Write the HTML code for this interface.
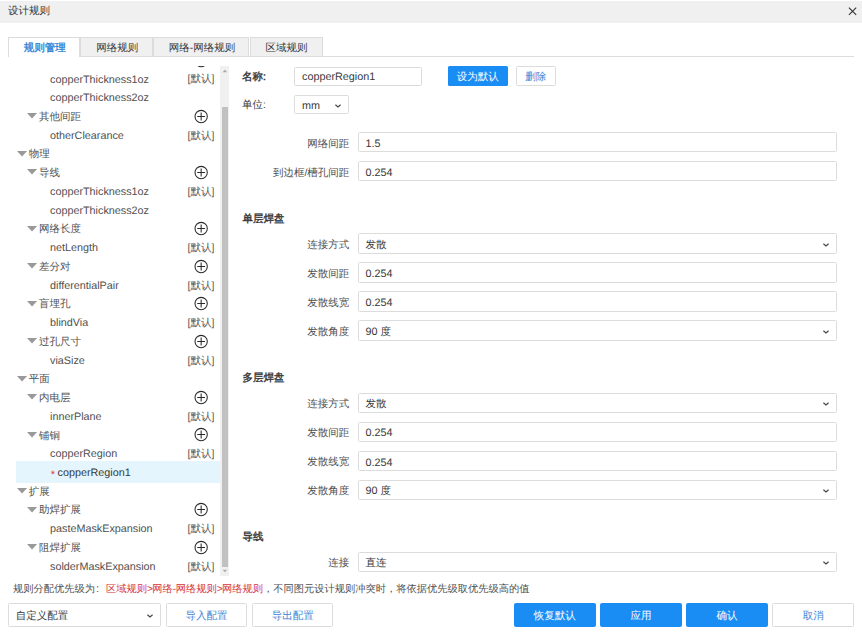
<!DOCTYPE html>
<html><head><meta charset="utf-8"><style>
html,body{margin:0;padding:0}
body{width:862px;height:639px;overflow:hidden;position:relative;background:#fff;font-family:"Liberation Sans",sans-serif;font-size:10.8px;color:#333;text-rendering:geometricPrecision}
.a{position:absolute}
.t{position:absolute;white-space:nowrap;height:18px;line-height:18px}
.z{font-size:10.5px}
.c3{color:#383838}.c4{color:#505050}.c5{color:#555}
.b{-webkit-text-stroke:0.4px currentColor}
</style></head><body>
<div class="a" style="left:0;top:1px;width:862px;height:22px;background:#f0f0f0"></div>
<div class="t c3" style="left:8.00px;top:2.30px;font-size:10.5px;">设计规则</div>
<svg class="a" style="left:847px;top:6px" width="11" height="11" viewBox="0 0 11 11"><path d="M1.9 1.6L9.2 8.9M9.2 1.6L1.9 8.9" stroke="#333" stroke-width="1.1"/></svg>
<div class="a" style="left:8px;top:56px;width:846px;height:1px;background:#dcdcdc"></div>
<div class="a" style="left:8.00px;top:37px;width:72.30px;height:20px;background:#fff;box-sizing:border-box;border:1px solid #dcdcdc;border-bottom:none"></div>
<div class="t c3" style="left:8.50px;top:38.90px;font-size:10.5px;width:72.30px;text-align:center;color:#2f84d6;-webkit-text-stroke:0.35px #2f84d6;">规则管理</div>
<div class="a" style="left:80.30px;top:37px;width:73.10px;height:19px;background:#f0f0f0;box-sizing:border-box;border:1px solid #dcdcdc;border-bottom:none"></div>
<div class="t c3" style="left:80.80px;top:38.90px;font-size:10.5px;width:73.10px;text-align:center;">网络规则</div>
<div class="a" style="left:153.40px;top:37px;width:96.10px;height:19px;background:#f0f0f0;box-sizing:border-box;border:1px solid #dcdcdc;border-bottom:none"></div>
<div class="t c3" style="left:153.90px;top:38.90px;font-size:10.5px;width:96.10px;text-align:center;">网络-网络规则</div>
<div class="a" style="left:249.50px;top:37px;width:73.10px;height:19px;background:#f0f0f0;box-sizing:border-box;border:1px solid #dcdcdc;border-bottom:none"></div>
<div class="t c3" style="left:250.00px;top:38.90px;font-size:10.5px;width:73.10px;text-align:center;">区域规则</div>
<div class="a" style="left:8px;top:66px;width:213px;height:511px;overflow:hidden">
<svg class="a" style="left:186px;top:-13px" width="15" height="15" viewBox="0 0 15 15"><circle cx="7.15" cy="7.50" r="6.15" fill="none" stroke="#2a2a2a" stroke-width="1.05"/><path d="M3.25 7.50H11.05M7.15 3.60V11.40" stroke="#2a2a2a" stroke-width="1.05"/></svg>
<div class="t c4" style="left:42.00px;top:4.50px;">copperThickness1oz</div>
<div class="t c5" style="left:179.50px;top:4.40px;font-size:10.5px;">[默认]</div>
<div class="t c4" style="left:42.00px;top:23.24px;">copperThickness2oz</div>
<svg class="a" style="left:18.50px;top:47.18px" width="11" height="6" viewBox="0 0 11 6"><path d="M0 0H10.1L5.05 5.4Z" fill="#999"/></svg>
<div class="t c4" style="left:31.00px;top:41.93px;font-size:10.5px;">其他间距</div>
<svg class="a" style="left:186px;top:43px" width="15" height="15" viewBox="0 0 15 15"><circle cx="7.15" cy="7.50" r="6.15" fill="none" stroke="#2a2a2a" stroke-width="1.05"/><path d="M3.25 7.50H11.05M7.15 3.60V11.40" stroke="#2a2a2a" stroke-width="1.05"/></svg>
<div class="t c4" style="left:42.00px;top:60.72px;">otherClearance</div>
<div class="t c5" style="left:179.50px;top:60.62px;font-size:10.5px;">[默认]</div>
<svg class="a" style="left:8.50px;top:84.66px" width="11" height="6" viewBox="0 0 11 6"><path d="M0 0H10.1L5.05 5.4Z" fill="#999"/></svg>
<div class="t c4" style="left:20.80px;top:79.41px;font-size:10.5px;">物理</div>
<svg class="a" style="left:18.50px;top:103.40px" width="11" height="6" viewBox="0 0 11 6"><path d="M0 0H10.1L5.05 5.4Z" fill="#999"/></svg>
<div class="t c4" style="left:31.00px;top:98.15px;font-size:10.5px;">导线</div>
<svg class="a" style="left:186px;top:99px" width="15" height="15" viewBox="0 0 15 15"><circle cx="7.15" cy="7.50" r="6.15" fill="none" stroke="#2a2a2a" stroke-width="1.05"/><path d="M3.25 7.50H11.05M7.15 3.60V11.40" stroke="#2a2a2a" stroke-width="1.05"/></svg>
<div class="t c4" style="left:42.00px;top:116.94px;">copperThickness1oz</div>
<div class="t c5" style="left:179.50px;top:116.84px;font-size:10.5px;">[默认]</div>
<div class="t c4" style="left:42.00px;top:135.68px;">copperThickness2oz</div>
<svg class="a" style="left:18.50px;top:159.62px" width="11" height="6" viewBox="0 0 11 6"><path d="M0 0H10.1L5.05 5.4Z" fill="#999"/></svg>
<div class="t c4" style="left:31.00px;top:154.37px;font-size:10.5px;">网络长度</div>
<svg class="a" style="left:186px;top:155px" width="15" height="15" viewBox="0 0 15 15"><circle cx="7.15" cy="7.50" r="6.15" fill="none" stroke="#2a2a2a" stroke-width="1.05"/><path d="M3.25 7.50H11.05M7.15 3.60V11.40" stroke="#2a2a2a" stroke-width="1.05"/></svg>
<div class="t c4" style="left:42.00px;top:173.16px;">netLength</div>
<div class="t c5" style="left:179.50px;top:173.06px;font-size:10.5px;">[默认]</div>
<svg class="a" style="left:18.50px;top:197.10px" width="11" height="6" viewBox="0 0 11 6"><path d="M0 0H10.1L5.05 5.4Z" fill="#999"/></svg>
<div class="t c4" style="left:31.00px;top:191.85px;font-size:10.5px;">差分对</div>
<svg class="a" style="left:186px;top:193px" width="15" height="15" viewBox="0 0 15 15"><circle cx="7.15" cy="7.50" r="6.15" fill="none" stroke="#2a2a2a" stroke-width="1.05"/><path d="M3.25 7.50H11.05M7.15 3.60V11.40" stroke="#2a2a2a" stroke-width="1.05"/></svg>
<div class="t c4" style="left:42.00px;top:210.64px;">differentialPair</div>
<div class="t c5" style="left:179.50px;top:210.54px;font-size:10.5px;">[默认]</div>
<svg class="a" style="left:18.50px;top:234.58px" width="11" height="6" viewBox="0 0 11 6"><path d="M0 0H10.1L5.05 5.4Z" fill="#999"/></svg>
<div class="t c4" style="left:31.00px;top:229.33px;font-size:10.5px;">盲埋孔</div>
<svg class="a" style="left:186px;top:230px" width="15" height="15" viewBox="0 0 15 15"><circle cx="7.15" cy="7.50" r="6.15" fill="none" stroke="#2a2a2a" stroke-width="1.05"/><path d="M3.25 7.50H11.05M7.15 3.60V11.40" stroke="#2a2a2a" stroke-width="1.05"/></svg>
<div class="t c4" style="left:42.00px;top:248.12px;">blindVia</div>
<div class="t c5" style="left:179.50px;top:248.02px;font-size:10.5px;">[默认]</div>
<svg class="a" style="left:18.50px;top:272.06px" width="11" height="6" viewBox="0 0 11 6"><path d="M0 0H10.1L5.05 5.4Z" fill="#999"/></svg>
<div class="t c4" style="left:31.00px;top:266.81px;font-size:10.5px;">过孔尺寸</div>
<svg class="a" style="left:186px;top:268px" width="15" height="15" viewBox="0 0 15 15"><circle cx="7.15" cy="7.50" r="6.15" fill="none" stroke="#2a2a2a" stroke-width="1.05"/><path d="M3.25 7.50H11.05M7.15 3.60V11.40" stroke="#2a2a2a" stroke-width="1.05"/></svg>
<div class="t c4" style="left:42.00px;top:285.60px;">viaSize</div>
<div class="t c5" style="left:179.50px;top:285.50px;font-size:10.5px;">[默认]</div>
<svg class="a" style="left:8.50px;top:309.54px" width="11" height="6" viewBox="0 0 11 6"><path d="M0 0H10.1L5.05 5.4Z" fill="#999"/></svg>
<div class="t c4" style="left:20.80px;top:304.29px;font-size:10.5px;">平面</div>
<svg class="a" style="left:18.50px;top:328.28px" width="11" height="6" viewBox="0 0 11 6"><path d="M0 0H10.1L5.05 5.4Z" fill="#999"/></svg>
<div class="t c4" style="left:31.00px;top:323.03px;font-size:10.5px;">内电层</div>
<svg class="a" style="left:186px;top:324px" width="15" height="15" viewBox="0 0 15 15"><circle cx="7.15" cy="7.50" r="6.15" fill="none" stroke="#2a2a2a" stroke-width="1.05"/><path d="M3.25 7.50H11.05M7.15 3.60V11.40" stroke="#2a2a2a" stroke-width="1.05"/></svg>
<div class="t c4" style="left:42.00px;top:341.82px;">innerPlane</div>
<div class="t c5" style="left:179.50px;top:341.72px;font-size:10.5px;">[默认]</div>
<svg class="a" style="left:18.50px;top:365.76px" width="11" height="6" viewBox="0 0 11 6"><path d="M0 0H10.1L5.05 5.4Z" fill="#999"/></svg>
<div class="t c4" style="left:31.00px;top:360.51px;font-size:10.5px;">铺铜</div>
<svg class="a" style="left:186px;top:361px" width="15" height="15" viewBox="0 0 15 15"><circle cx="7.15" cy="7.50" r="6.15" fill="none" stroke="#2a2a2a" stroke-width="1.05"/><path d="M3.25 7.50H11.05M7.15 3.60V11.40" stroke="#2a2a2a" stroke-width="1.05"/></svg>
<div class="t c4" style="left:42.00px;top:379.30px;">copperRegion</div>
<div class="t c5" style="left:179.50px;top:379.20px;font-size:10.5px;">[默认]</div>
<div class="a" style="left:8.10px;top:395.30px;width:204.90px;height:21.5px;background:#e4f5fd"></div>
<div class="t " style="left:42.70px;top:400.34px;color:#d9434a;font-size:11px">*</div>
<div class="t c3" style="left:49.50px;top:398.04px;">copperRegion1</div>
<svg class="a" style="left:8.50px;top:421.98px" width="11" height="6" viewBox="0 0 11 6"><path d="M0 0H10.1L5.05 5.4Z" fill="#999"/></svg>
<div class="t c4" style="left:20.80px;top:416.73px;font-size:10.5px;">扩展</div>
<svg class="a" style="left:18.50px;top:440.72px" width="11" height="6" viewBox="0 0 11 6"><path d="M0 0H10.1L5.05 5.4Z" fill="#999"/></svg>
<div class="t c4" style="left:31.00px;top:435.47px;font-size:10.5px;">助焊扩展</div>
<svg class="a" style="left:186px;top:436px" width="15" height="15" viewBox="0 0 15 15"><circle cx="7.15" cy="7.50" r="6.15" fill="none" stroke="#2a2a2a" stroke-width="1.05"/><path d="M3.25 7.50H11.05M7.15 3.60V11.40" stroke="#2a2a2a" stroke-width="1.05"/></svg>
<div class="t c4" style="left:42.00px;top:454.26px;">pasteMaskExpansion</div>
<div class="t c5" style="left:179.50px;top:454.16px;font-size:10.5px;">[默认]</div>
<svg class="a" style="left:18.50px;top:478.20px" width="11" height="6" viewBox="0 0 11 6"><path d="M0 0H10.1L5.05 5.4Z" fill="#999"/></svg>
<div class="t c4" style="left:31.00px;top:472.95px;font-size:10.5px;">阻焊扩展</div>
<svg class="a" style="left:186px;top:474px" width="15" height="15" viewBox="0 0 15 15"><circle cx="7.15" cy="7.50" r="6.15" fill="none" stroke="#2a2a2a" stroke-width="1.05"/><path d="M3.25 7.50H11.05M7.15 3.60V11.40" stroke="#2a2a2a" stroke-width="1.05"/></svg>
<div class="t c4" style="left:42.00px;top:491.74px;">solderMaskExpansion</div>
<div class="t c5" style="left:179.50px;top:491.64px;font-size:10.5px;">[默认]</div>
</div>
<div class="a" style="left:220.2px;top:65.8px;width:9.3px;height:510.6px;background:#f0f0f0"></div>
<div class="a" style="left:222px;top:107px;width:5.7px;height:459.8px;background:#c1c1c1"></div>
<svg class="a" style="left:221.9px;top:69px" width="6" height="4" viewBox="0 0 6 4"><path d="M0.6 3.2L2.9 0.8L5.2 3.2Z" fill="#a8a8a8"/></svg>
<svg class="a" style="left:221.9px;top:569px" width="6" height="4" viewBox="0 0 6 4"><path d="M0.6 0.8L2.9 3.2L5.2 0.8Z" fill="#a8a8a8"/></svg>
<div class="t c3 b" style="left:242.00px;top:67.80px;font-size:10.5px;">名称:</div>
<div class="a" style="left:294.00px;top:66.50px;width:128.00px;height:19.00px;background:#fff;box-sizing:border-box;border:1px solid #dcdcdc;border-radius:1.5px;"></div>
<div class="t c3" style="left:302.00px;top:68.20px;">copperRegion1</div>
<div class="a" style="left:447.8px;top:66px;width:59.8px;height:19.6px;background:#1a8df5;border-radius:1.5px"></div>
<div class="t " style="left:447.80px;top:67.50px;font-size:10.5px;width:59.8px;text-align:center;color:#fff">设为默认</div>
<div class="a" style="left:516.00px;top:66.00px;width:39.50px;height:19.60px;background:#fff;box-sizing:border-box;border:1px solid #dcdcdc;border-radius:1.5px;"></div>
<div class="t " style="left:516.00px;top:67.80px;font-size:10.5px;width:39.5px;text-align:center;color:#3b86d6">删除</div>
<div class="t c3" style="left:242.00px;top:96.25px;font-size:10.5px;">单位:</div>
<div class="a" style="left:294.00px;top:95.10px;width:54.80px;height:19.30px;background:#fff;box-sizing:border-box;border:1px solid #dcdcdc;border-radius:1.5px;"></div>
<div class="t c3" style="left:302.00px;top:96.70px;">mm</div>
<svg class="a" style="left:332.50px;top:101.85px" width="10" height="8" viewBox="0 0 10 8"><path d="M2.4 2.75L5 5.0L7.6 2.75" fill="none" stroke="#444" stroke-width="1.15"/></svg>
<div class="t c4" style="left:150.00px;top:134.53px;font-size:10.5px;width:199.3px;text-align:right">网络间距</div><div class="a" style="left:357.60px;top:131.90px;width:479.70px;height:20.56px;background:#fff;box-sizing:border-box;border:1px solid #dcdcdc;border-radius:1.5px;"></div><div class="t c3" style="left:365.50px;top:134.78px;">1.5</div>
<div class="t c4" style="left:150.00px;top:163.55px;font-size:10.5px;width:199.3px;text-align:right">到边框/槽孔间距</div><div class="a" style="left:357.60px;top:160.90px;width:479.70px;height:20.60px;background:#fff;box-sizing:border-box;border:1px solid #dcdcdc;border-radius:1.5px;"></div><div class="t c3" style="left:365.50px;top:163.80px;">0.254</div>
<div class="t c3 b" style="left:242.50px;top:209.95px;font-size:10.5px;">单层焊盘</div>
<div class="t c4" style="left:150.00px;top:235.75px;font-size:10.5px;width:199.3px;text-align:right">连接方式</div><div class="a" style="left:357.60px;top:233.10px;width:479.70px;height:20.60px;background:#fff;box-sizing:border-box;border:1px solid #dcdcdc;border-radius:1.5px;"></div><div class="t c3" style="left:365.50px;top:235.50px;font-size:10.5px;">发散</div><svg class="a" style="left:820.70px;top:240.50px" width="10" height="8" viewBox="0 0 10 8"><path d="M2.4 2.75L5 5.0L7.6 2.75" fill="none" stroke="#444" stroke-width="1.15"/></svg>
<div class="t c4" style="left:150.00px;top:264.80px;font-size:10.5px;width:199.3px;text-align:right">发散间距</div><div class="a" style="left:357.60px;top:262.10px;width:479.70px;height:20.70px;background:#fff;box-sizing:border-box;border:1px solid #dcdcdc;border-radius:1.5px;"></div><div class="t c3" style="left:365.50px;top:265.05px;">0.254</div>
<div class="t c4" style="left:150.00px;top:293.75px;font-size:10.5px;width:199.3px;text-align:right">发散线宽</div><div class="a" style="left:357.60px;top:291.10px;width:479.70px;height:20.60px;background:#fff;box-sizing:border-box;border:1px solid #dcdcdc;border-radius:1.5px;"></div><div class="t c3" style="left:365.50px;top:294.00px;">0.254</div>
<div class="t c4" style="left:150.00px;top:322.80px;font-size:10.5px;width:199.3px;text-align:right">发散角度</div><div class="a" style="left:357.60px;top:320.10px;width:479.70px;height:20.70px;background:#fff;box-sizing:border-box;border:1px solid #dcdcdc;border-radius:1.5px;"></div><div class="t c3" style="left:365.50px;top:323.05px;">90 <span class="z">度</span></div><svg class="a" style="left:820.70px;top:327.55px" width="10" height="8" viewBox="0 0 10 8"><path d="M2.4 2.75L5 5.0L7.6 2.75" fill="none" stroke="#444" stroke-width="1.15"/></svg>
<div class="t c3 b" style="left:242.50px;top:369.35px;font-size:10.5px;">多层焊盘</div>
<div class="t c4" style="left:150.00px;top:395.15px;font-size:10.5px;width:199.3px;text-align:right">连接方式</div><div class="a" style="left:357.60px;top:392.90px;width:479.70px;height:19.80px;background:#fff;box-sizing:border-box;border:1px solid #dcdcdc;border-radius:1.5px;"></div><div class="t c3" style="left:365.50px;top:394.90px;font-size:10.5px;">发散</div><svg class="a" style="left:820.70px;top:399.90px" width="10" height="8" viewBox="0 0 10 8"><path d="M2.4 2.75L5 5.0L7.6 2.75" fill="none" stroke="#444" stroke-width="1.15"/></svg>
<div class="t c4" style="left:150.00px;top:424.15px;font-size:10.5px;width:199.3px;text-align:right">发散间距</div><div class="a" style="left:357.60px;top:421.80px;width:479.70px;height:20.00px;background:#fff;box-sizing:border-box;border:1px solid #dcdcdc;border-radius:1.5px;"></div><div class="t c3" style="left:365.50px;top:424.40px;">0.254</div>
<div class="t c4" style="left:150.00px;top:453.25px;font-size:10.5px;width:199.3px;text-align:right">发散线宽</div><div class="a" style="left:357.60px;top:450.90px;width:479.70px;height:20.00px;background:#fff;box-sizing:border-box;border:1px solid #dcdcdc;border-radius:1.5px;"></div><div class="t c3" style="left:365.50px;top:453.50px;">0.254</div>
<div class="t c4" style="left:150.00px;top:482.15px;font-size:10.5px;width:199.3px;text-align:right">发散角度</div><div class="a" style="left:357.60px;top:479.80px;width:479.70px;height:20.00px;background:#fff;box-sizing:border-box;border:1px solid #dcdcdc;border-radius:1.5px;"></div><div class="t c3" style="left:365.50px;top:482.40px;">90 <span class="z">度</span></div><svg class="a" style="left:820.70px;top:486.90px" width="10" height="8" viewBox="0 0 10 8"><path d="M2.4 2.75L5 5.0L7.6 2.75" fill="none" stroke="#444" stroke-width="1.15"/></svg>
<div class="t c3 b" style="left:242.50px;top:528.25px;font-size:10.5px;">导线</div>
<div class="t c4" style="left:150.00px;top:554.35px;font-size:10.5px;width:199.3px;text-align:right">连接</div><div class="a" style="left:357.60px;top:551.90px;width:479.70px;height:20.20px;background:#fff;box-sizing:border-box;border:1px solid #dcdcdc;border-radius:1.5px;"></div><div class="t c3" style="left:365.50px;top:554.10px;font-size:10.5px;">直连</div><svg class="a" style="left:820.70px;top:559.10px" width="10" height="8" viewBox="0 0 10 8"><path d="M2.4 2.75L5 5.0L7.6 2.75" fill="none" stroke="#444" stroke-width="1.15"/></svg>
<div class="t c4" style="left:13.00px;top:580.10px;font-size:10.25px;">规则分配优先级为<span style="font-size:10.8px;margin-left:1px">:</span><span style="margin-left:7px;"></span><span style="color:#d6353b">区域规则<span style="letter-spacing:-0.7px">&gt;</span>网络<span style="letter-spacing:-0.4px">-</span>网络规则<span style="letter-spacing:-0.7px">&gt;</span>网络规则</span>，不同图元设计规则冲突时，将依据优先级取优先级高的值</div>
<div class="a" style="left:8.40px;top:603.00px;width:152.40px;height:23.60px;background:#fff;box-sizing:border-box;border:1px solid #dcdcdc;border-radius:1.5px;"></div>
<div class="t c3" style="left:15.80px;top:606.90px;font-size:10.5px;">自定义配置</div>
<svg class="a" style="left:144.80px;top:611.80px" width="10" height="8" viewBox="0 0 10 8"><path d="M2.4 2.75L5 5.0L7.6 2.75" fill="none" stroke="#444" stroke-width="1.15"/></svg>
<div class="a" style="left:166.10px;top:603.00px;width:80.80px;height:23.60px;background:#fff;box-sizing:border-box;border:1px solid #dcdcdc;border-radius:1.5px;"></div>
<div class="t " style="left:166.10px;top:606.80px;font-size:10.5px;width:80.8px;text-align:center;color:#3b86d6">导入配置</div>
<div class="a" style="left:252.30px;top:603.00px;width:81.10px;height:23.60px;background:#fff;box-sizing:border-box;border:1px solid #dcdcdc;border-radius:1.5px;"></div>
<div class="t " style="left:252.30px;top:606.80px;font-size:10.5px;width:81.1px;text-align:center;color:#3b86d6">导出配置</div>
<div class="a" style="left:513.9px;top:603px;width:81.70px;height:23.6px;background:#1a8df5;border-radius:2px"></div>
<div class="t " style="left:513.90px;top:606.80px;font-size:10.5px;width:81.70px;text-align:center;color:#fff">恢复默认</div>
<div class="a" style="left:600.2px;top:603px;width:81.50px;height:23.6px;background:#1a8df5;border-radius:2px"></div>
<div class="t " style="left:600.20px;top:606.80px;font-size:10.5px;width:81.50px;text-align:center;color:#fff">应用</div>
<div class="a" style="left:686.3px;top:603px;width:81.30px;height:23.6px;background:#1a8df5;border-radius:2px"></div>
<div class="t " style="left:686.30px;top:606.80px;font-size:10.5px;width:81.30px;text-align:center;color:#fff">确认</div>
<div class="a" style="left:772.20px;top:603.00px;width:81.60px;height:23.60px;background:#fff;box-sizing:border-box;border:1px solid #dcdcdc;border-radius:1.5px;"></div>
<div class="t " style="left:772.50px;top:606.80px;font-size:10.5px;width:81.3px;text-align:center;color:#3b86d6">取消</div>
</body></html>
